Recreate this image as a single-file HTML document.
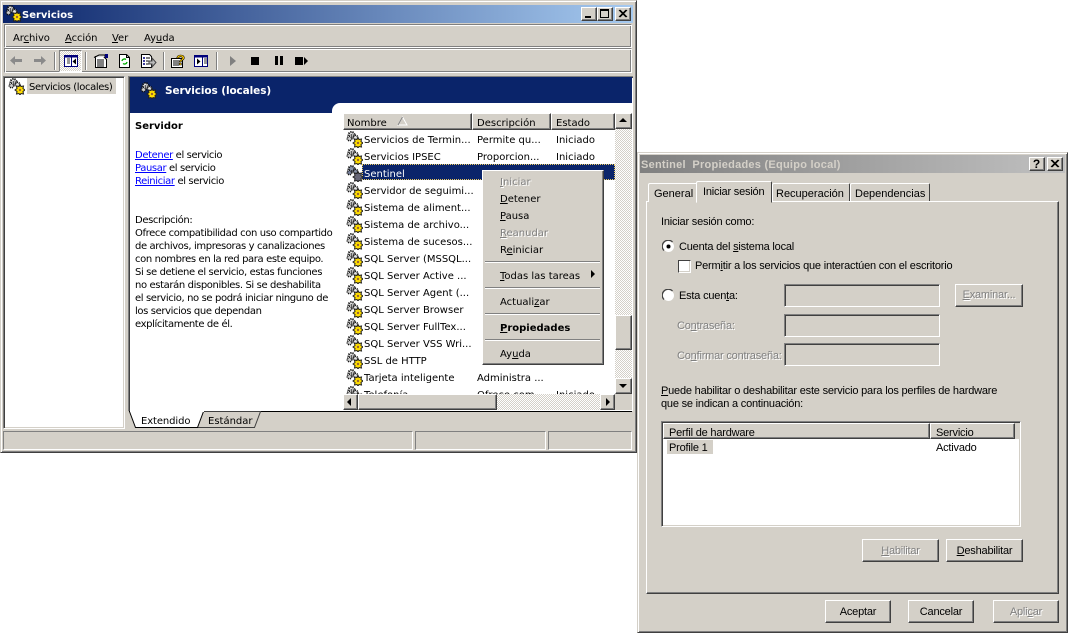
<!DOCTYPE html>
<html><head><meta charset="utf-8"><title>Servicios</title>
<style>
html,body{margin:0;padding:0;background:#fff;width:1070px;height:639px;overflow:hidden}
#r{position:relative;width:1070px;height:639px;overflow:hidden;font-family:"DejaVu Sans",sans-serif;font-size:10px;color:#000}
.a,.t,.b,.s,svg.i{position:absolute;box-sizing:border-box}
.t{white-space:nowrap;line-height:14px;height:14px;margin-top:2px}
.p{letter-spacing:-.38px;margin-top:4px}
.m{margin-top:4px}
#list .t{margin-top:4px}
.n{letter-spacing:-.08px}
.d{font-family:"Liberation Sans",sans-serif;font-size:11px}
#dlg .t{margin-top:1px}
#dlg .t.z{margin-top:0}
#dlg .l{letter-spacing:-.2px}
.g{color:#808080;text-shadow:1px 1px 0 #fff}
.raised{background:#d4d0c8;border:1px solid;border-color:#fff #404040 #404040 #fff;box-shadow:inset -1px -1px 0 #808080}
.sunk{border:1px solid;border-color:#808080 #fff #fff #808080;box-shadow:inset 1px 1px 0 #404040,inset -1px -1px 0 #d4d0c8}
.thin{border:1px solid;border-color:#808080 #fff #fff #808080}
.dith{background:repeating-conic-gradient(#fff 0 25%,#d4d0c8 0 50%) 0 0/2px 2px}
.sep{position:absolute;width:2px;background:#fff;border-left:1px solid #808080;box-sizing:border-box}
.hs{position:absolute;height:2px;background:#fff;border-top:1px solid #808080;box-sizing:border-box}
a{color:#0000ff;text-decoration:underline}
.sel{background:#d4d0c8}
.center{text-align:center}
</style></head><body><div id="r">
<svg width="0" height="0" style="position:absolute"><defs>
<symbol id="g" viewBox="0 0 17 17">
<circle cx="5.500" cy="4" r="3" fill="#e6e6e6" stroke="#111" stroke-width="2" stroke-dasharray="1.200 .9"/>
<circle cx="3.500" cy="7.500" r="2.200" fill="#d0d0d0" stroke="#111" stroke-width="1.600" stroke-dasharray="1.100 .8"/>
<circle cx="9.500" cy="6.500" r="2.200" fill="#e6e6e6" stroke="#111" stroke-width="1.600" stroke-dasharray="1.100 .8"/>
<circle cx="5.500" cy="4" r="1" fill="#555"/>
<path d="M12 6.500l1 2 2.500-.5-.5 2.500 2 1.500-2 1.500.5 2.500-2.500-.5-1 1.500-1-1.500-2.500.5.500-2.500-2-1.500 2-1.500-.5-2.500 2.500.5z" fill="#fd0" stroke="#222" stroke-width="1"/>
<circle cx="12" cy="12" r="1.200" fill="#963"/>
</symbol>
<symbol id="gd" viewBox="0 0 17 17">
<circle cx="5.500" cy="4" r="3" fill="#8a94aa" stroke="#111" stroke-width="2" stroke-dasharray="1.200 .9"/>
<circle cx="3.500" cy="7.500" r="2.200" fill="#7a84a0" stroke="#111" stroke-width="1.600" stroke-dasharray="1.100 .8"/>
<circle cx="9.500" cy="6.500" r="2.200" fill="#8a94aa" stroke="#111" stroke-width="1.600" stroke-dasharray="1.100 .8"/>
<path d="M12 6.500l1 2 2.500-.5-.5 2.500 2 1.500-2 1.500.5 2.500-2.500-.5-1 1.500-1-1.500-2.500.5.500-2.500-2-1.500 2-1.500-.5-2.500 2.500.5z" fill="#667" stroke="#222" stroke-width="1"/>
</symbol>
</defs></svg>

<!-- SERVICES WINDOW -->
<div class="a" style="left:0;top:0;width:637px;height:453px;background:#d4d0c8;border:1px solid;border-color:#d4d0c8 #404040 #404040 #d4d0c8;box-shadow:inset 1px 1px 0 #fff,inset -1px -1px 0 #808080"></div>
<div class="a" style="left:3px;top:5px;width:630px;height:18px;background:linear-gradient(90deg,#0a246a,#a6caf0)"></div>
<svg class="i" style="left:5px;top:5px" width="17" height="17"><use href="#g"/></svg>
<div class="t" style="left:22px;top:7px;font-weight:bold;color:#fff;font-size:10px">Servicios</div>
<div class="b raised" style="left:581px;top:7px;width:16px;height:14px"></div><div class="a" style="left:585px;top:16px;width:6px;height:2px;background:#000"></div>
<div class="b raised" style="left:597px;top:7px;width:16px;height:14px"></div><div class="a" style="left:600px;top:9px;width:9px;height:9px;border:1px solid #000;border-top-width:2px"></div>
<div class="b raised" style="left:615px;top:7px;width:16px;height:14px"></div>
<svg class="i" style="left:618px;top:9px" width="10" height="9"><path d="M1 1l7 7M2 1l7 7M8 1L1 8M9 1L2 8" stroke="#000" fill="none" stroke-width="1"/></svg>

<!-- menu -->
<div class="a" style="left:4px;top:24px;width:628px;height:24px;border:1px solid;border-color:#808080 #fff #fff #808080;box-shadow:inset 1px 1px 0 #fff,inset -1px -1px 0 #808080"></div>
<div class="t n" style="left:13px;top:30px">Ar<u>c</u>hivo</div>
<div class="t n" style="left:65px;top:30px"><u>A</u>cción</div>
<div class="t n" style="left:112px;top:30px"><u>V</u>er</div>
<div class="t n" style="left:144px;top:30px">Ay<u>u</u>da</div>

<!-- toolbar -->
<div class="a" style="left:4px;top:48px;width:628px;height:25px;border:1px solid;border-color:#808080 #fff #fff #808080;box-shadow:inset 1px 1px 0 #fff,inset -1px -1px 0 #808080"></div>
<svg class="i" style="left:9px;top:54px" width="15" height="13"><path d="M1 6.500L6 2v3h7v3H6v3z" fill="#8a8a8a"/></svg>
<svg class="i" style="left:32px;top:54px" width="15" height="13"><path d="M14 6.500L9 2v3H2v3h7v3z" fill="#8a8a8a"/></svg>
<div class="sep" style="left:54px;top:52px;height:18px"></div>
<div class="a dith" style="left:59px;top:50px;width:23px;height:22px;border:1px solid;border-color:#808080 #fff #fff #808080"></div>
<svg class="i" style="left:64px;top:55px" width="14" height="12"><rect x=".5" y=".5" width="13" height="11" fill="#fff" stroke="#00007b"/><rect x="1" y="1" width="12" height="1.500" fill="#00007b"/><path d="M7.500 1v10" stroke="#00007b"/><path d="M3 4h3M3 6h3M3 8h3" stroke="#333"/><path d="M12 3.500L8.500 6.500l3.500 3z" fill="#000"/></svg>
<div class="sep" style="left:85px;top:52px;height:18px"></div>
<svg class="i" style="left:92px;top:53px" width="18" height="16"><path d="M3.500 3.500h8l3 3v8h-11z" fill="#fff" stroke="#000"/><path d="M2 4.500L7 2h6v2" fill="#ddd" stroke="#000"/><rect x="13" y="1" width="3" height="4" fill="#00007b"/><path d="M5 7h7M5 9h7M5 11h7M5 13h7" stroke="#000"/></svg>
<svg class="i" style="left:117px;top:53px" width="15" height="16"><path d="M2.500 1.500h7l3 3v10h-10z" fill="#fff" stroke="#000"/><path d="M9.500 1.500v3h3" fill="none" stroke="#000"/><path d="M5 8a2.500 2.500 0 0 1 4-1.500M10 9a2.500 2.500 0 0 1-4 1.500" fill="none" stroke="#0a0" stroke-width="1.300"/></svg>
<svg class="i" style="left:140px;top:53px" width="17" height="16"><path d="M1.500 1.500h8l2 2v11h-10z" fill="#fff" stroke="#000"/><path d="M3 5h2M3 8h2M3 11h2" stroke="#00007b" stroke-width="1.500"/><path d="M6 5h4M6 8h3M6 11h3" stroke="#000"/><path d="M9 8h3V5l4 4.500-4 4.500v-3H9z" fill="#bbb" stroke="#444"/></svg>
<div class="sep" style="left:163px;top:52px;height:18px"></div>
<svg class="i" style="left:170px;top:53px" width="17" height="16"><path d="M1.500 5.500h11v9h-11z" fill="#fff" stroke="#000"/><path d="M3 8h6M3 10h6M3 12h6" stroke="#000"/><text x="6" y="12" font-family="Liberation Sans" font-weight="bold" font-size="15" fill="#fc0" stroke="#000" stroke-width=".6">?</text></svg>
<svg class="i" style="left:194px;top:55px" width="14" height="12"><rect x=".5" y=".5" width="13" height="11" fill="#fff" stroke="#00007b"/><rect x="1" y="1" width="12" height="1.500" fill="#00007b"/><path d="M8.500 1v10" stroke="#00007b"/><path d="M10 4h3M10 6h3M10 8h3" stroke="#333"/><path d="M3 3.500l3.500 3-3.500 3z" fill="#000"/></svg>
<div class="sep" style="left:216px;top:52px;height:18px"></div>
<svg class="i" style="left:229px;top:55px" width="9" height="12"><path d="M1 1l6 5-6 5z" fill="#808080"/></svg>
<div class="a" style="left:251px;top:57px;width:8px;height:8px;background:#000"></div>
<div class="a" style="left:275px;top:56px;width:3px;height:9px;background:#000"></div><div class="a" style="left:280px;top:56px;width:3px;height:9px;background:#000"></div>
<div class="a" style="left:295px;top:57px;width:8px;height:8px;background:#000"></div>
<svg class="i" style="left:303px;top:57px" width="6" height="8"><path d="M1 0l4 4-4 4z" fill="#000"/></svg>

<!-- left pane -->
<div class="a sunk" style="left:3px;top:76px;width:122px;height:353px;background:#fff"></div>
<svg class="i" style="left:8px;top:78px" width="17" height="17"><use href="#g"/></svg>
<div class="a sel" style="left:27px;top:78px;width:89px;height:16px"></div>
<div class="t p" style="left:29px;top:77px">Servicios (locales)</div>

<!-- right pane -->
<div class="a" style="left:128px;top:76px;width:505px;height:335px;background:#fff;border-top:1px solid #808080;border-left:1px solid #808080;box-shadow:inset 1px 1px 0 #404040"></div>
<div class="a" style="left:130px;top:77px;width:502px;height:26px;background:#0a246a"></div>
<div class="a" style="left:130px;top:103px;width:202px;height:10px;background:#0a246a"></div>
<div class="a" style="left:332px;top:103px;width:10px;height:10px;background:#0a246a"></div>
<div class="a" style="left:332px;top:103px;width:14px;height:14px;background:#fff;border-radius:8px 0 0 0"></div>
<svg class="i" style="left:140px;top:82px" width="17" height="17"><use href="#g"/></svg>
<div class="t" style="left:165px;top:83px;margin-top:1px;color:#fff;font-weight:bold;font-size:10.500px;letter-spacing:-.1px">Servicios (locales)</div>
<div class="t m" style="left:135px;top:116px;font-weight:bold">Servidor</div>
<div class="t p" style="left:135px;top:145px"><a>Detener</a> el servicio</div>
<div class="t p" style="left:135px;top:158px"><a>Pausar</a> el servicio</div>
<div class="t p" style="left:135px;top:171px"><a>Reiniciar</a> el servicio</div>
<div class="t p" style="left:135px;top:210px">Descripción:</div>
<div class="t p" style="left:135px;top:223px">Ofrece compatibilidad con uso compartido</div>
<div class="t p" style="left:135px;top:236px">de archivos, impresoras y canalizaciones</div>
<div class="t p" style="left:135px;top:249px">con nombres en la red para este equipo.</div>
<div class="t p" style="left:135px;top:262px">Si se detiene el servicio, estas funciones</div>
<div class="t p" style="left:135px;top:275px">no estarán disponibles. Si se deshabilita</div>
<div class="t p" style="left:135px;top:288px">el servicio, no se podrá iniciar ninguno de</div>
<div class="t p" style="left:135px;top:301px">los servicios que dependan</div>
<div class="t p" style="left:135px;top:314px">explícitamente de él.</div>

<!-- list -->
<div class="a" id="list" style="left:343px;top:113px;width:272px;height:281px;overflow:hidden">
<div class="a raised" style="left:0;top:0;width:129px;height:17px"></div>
<div class="a raised" style="left:129px;top:0;width:79px;height:17px"></div>
<div class="a raised" style="left:208px;top:0;width:64px;height:17px"></div>
<div class="t" style="left:4px;top:0">Nombre</div>
<svg class="i" style="left:54px;top:3px" width="11" height="10"><path d="M5.500 1L1 9h9z" fill="none" stroke="#fff"/><path d="M5.500 1L1 9" stroke="#808080" fill="none"/></svg>
<div class="t" style="left:134px;top:0">Descripción</div>
<div class="t" style="left:213px;top:0">Estado</div>

<svg class="i" style="left:3px;top:18px" width="17" height="17"><use href="#g"/></svg><div class="t" style="left:21px;top:17px">Servicios de Termin...</div><div class="t" style="left:134px;top:17px">Permite qu...</div><div class="t" style="left:213px;top:17px">Iniciado</div>
<svg class="i" style="left:3px;top:35px" width="17" height="17"><use href="#g"/></svg><div class="t" style="left:21px;top:34px">Servicios IPSEC</div><div class="t" style="left:134px;top:34px">Proporcion...</div><div class="t" style="left:213px;top:34px">Iniciado</div>
<div class="a" style="left:19px;top:51px;width:253px;height:16px;background:#0a246a;outline:1px dotted #e8c860;outline-offset:-1px"></div>
<svg class="i" style="left:3px;top:52px" width="17" height="17"><use href="#gd"/></svg><div class="t" style="left:21px;top:51px;color:#fff">Sentinel</div>
<svg class="i" style="left:3px;top:69px" width="17" height="17"><use href="#g"/></svg><div class="t" style="left:21px;top:68px">Servidor de seguimi...</div>
<svg class="i" style="left:3px;top:86px" width="17" height="17"><use href="#g"/></svg><div class="t" style="left:21px;top:85px">Sistema de aliment...</div>
<svg class="i" style="left:3px;top:103px" width="17" height="17"><use href="#g"/></svg><div class="t" style="left:21px;top:102px">Sistema de archivo...</div>
<svg class="i" style="left:3px;top:120px" width="17" height="17"><use href="#g"/></svg><div class="t" style="left:21px;top:119px">Sistema de sucesos...</div>
<svg class="i" style="left:3px;top:137px" width="17" height="17"><use href="#g"/></svg><div class="t" style="left:21px;top:136px">SQL Server (MSSQL...</div>
<svg class="i" style="left:3px;top:154px" width="17" height="17"><use href="#g"/></svg><div class="t" style="left:21px;top:153px">SQL Server Active ...</div>
<svg class="i" style="left:3px;top:171px" width="17" height="17"><use href="#g"/></svg><div class="t" style="left:21px;top:170px">SQL Server Agent (...</div>
<svg class="i" style="left:3px;top:188px" width="17" height="17"><use href="#g"/></svg><div class="t" style="left:21px;top:187px">SQL Server Browser</div>
<svg class="i" style="left:3px;top:205px" width="17" height="17"><use href="#g"/></svg><div class="t" style="left:21px;top:204px">SQL Server FullTex...</div>
<svg class="i" style="left:3px;top:222px" width="17" height="17"><use href="#g"/></svg><div class="t" style="left:21px;top:221px">SQL Server VSS Wri...</div>
<svg class="i" style="left:3px;top:239px" width="17" height="17"><use href="#g"/></svg><div class="t" style="left:21px;top:238px">SSL de HTTP</div>
<svg class="i" style="left:3px;top:256px" width="17" height="17"><use href="#g"/></svg><div class="t" style="left:21px;top:255px">Tarjeta inteligente</div><div class="t" style="left:134px;top:255px">Administra ...</div>
<svg class="i" style="left:3px;top:273px" width="17" height="17"><use href="#g"/></svg><div class="t" style="left:21px;top:272px">Telefonía</div><div class="t" style="left:134px;top:272px">Ofrece com...</div><div class="t" style="left:213px;top:272px">Iniciado</div>
</div>

<!-- scrollbars -->
<div class="a dith" style="left:615px;top:113px;width:17px;height:281px"></div>
<div class="a raised" style="left:615px;top:113px;width:17px;height:16px"></div>
<svg class="i" style="left:619px;top:118px" width="9" height="5"><path d="M4 0L0 4h8z" fill="#000"/></svg>
<div class="a raised" style="left:615px;top:315px;width:17px;height:35px"></div>
<div class="a raised" style="left:615px;top:378px;width:17px;height:16px"></div>
<svg class="i" style="left:619px;top:384px" width="9" height="5"><path d="M0 0h8L4 4z" fill="#000"/></svg>
<div class="a dith" style="left:343px;top:394px;width:272px;height:16px"></div>
<div class="a raised" style="left:343px;top:394px;width:15px;height:16px"></div>
<svg class="i" style="left:347px;top:398px" width="5" height="9"><path d="M4 0v8L0 4z" fill="#000"/></svg>
<div class="a raised" style="left:358px;top:394px;width:139px;height:16px"></div>
<div class="a raised" style="left:600px;top:394px;width:15px;height:16px"></div>
<svg class="i" style="left:606px;top:398px" width="5" height="9"><path d="M0 0v8l4-4z" fill="#000"/></svg>
<div class="a" style="left:615px;top:394px;width:17px;height:16px;background:#d4d0c8"></div>

<!-- context menu -->
<div class="a raised" style="left:482px;top:170px;width:122px;height:195px"></div>
<div class="t g m" style="left:500px;top:172px"><u>I</u>niciar</div>
<div class="t m" style="left:500px;top:189px"><u>D</u>etener</div>
<div class="t m" style="left:500px;top:206px"><u>P</u>ausa</div>
<div class="t g m" style="left:500px;top:223px"><u>R</u>eanudar</div>
<div class="t m" style="left:500px;top:240px">R<u>e</u>iniciar</div>
<div class="hs" style="left:485px;top:261px;width:115px"></div>
<div class="t m" style="left:500px;top:266px"><u>T</u>odas las tareas</div>
<svg class="i" style="left:591px;top:270px" width="5" height="9"><path d="M0 0v8l4-4z" fill="#000"/></svg>
<div class="hs" style="left:485px;top:287px;width:115px"></div>
<div class="t m" style="left:500px;top:292px">Actuali<u>z</u>ar</div>
<div class="hs" style="left:485px;top:313px;width:115px"></div>
<div class="t m" style="left:500px;top:318px;font-weight:bold"><u>P</u>ropiedades</div>
<div class="hs" style="left:485px;top:339px;width:115px"></div>
<div class="t m" style="left:500px;top:344px">Ay<u>u</u>da</div>

<!-- tabs -->
<div class="a" style="left:129px;top:411px;width:503px;height:1px;background:#000"></div>
<svg class="i" style="left:128px;top:410px" width="140" height="19">
<path d="M74.500 1.500h58l-6 16h-58z" fill="#d4d0c8" stroke="#404040"/>
<path d="M1.500 1.500l6 16h62l6-16z" fill="#fff" stroke="#000"/>
<path d="M2 1h74" stroke="#fff" stroke-width="2"/>
</svg>
<div class="t" style="left:141px;top:413px;letter-spacing:-.1px">Extendido</div>
<div class="t" style="left:208px;top:413px">Estándar</div>

<!-- status -->
<div class="a" style="left:3px;top:431px;width:410px;height:19px;border:1px solid;border-color:#808080 #fff #fff #808080"></div>
<div class="a" style="left:415px;top:431px;width:131px;height:19px;border:1px solid;border-color:#808080 #fff #fff #808080"></div>
<div class="a" style="left:548px;top:431px;width:84px;height:19px;border:1px solid;border-color:#808080 #fff #fff #808080"></div>

<!-- DIALOG -->
<div class="a d" id="dlg" style="left:0;top:0;width:1070px;height:639px">
<div class="a" style="left:637px;top:152px;width:431px;height:481px;background:#d4d0c8;border:1px solid;border-color:#d4d0c8 #404040 #404040 #d4d0c8;box-shadow:inset 1px 1px 0 #fff,inset -1px -1px 0 #808080"></div>
<div class="a" style="left:640px;top:155px;width:425px;height:18px;background:linear-gradient(90deg,#808080,#c0c0c0)"></div>
<div class="t" style="left:641px;top:157px;font-weight:bold;color:#d4d0c8;font-size:11px;letter-spacing:.25px">Sentinel&nbsp;&nbsp;Propiedades (Equipo local)</div>
<div class="a raised" style="left:1029px;top:157px;width:16px;height:14px"></div>
<div class="t z" style="left:1029px;top:157px;width:15px;text-align:center;font-weight:bold;font-size:12px">?</div>
<div class="a raised" style="left:1047px;top:157px;width:16px;height:14px"></div>
<svg class="i" style="left:1050px;top:159px" width="10" height="9"><path d="M1 1l7 7M2 1l7 7M8 1L1 8M9 1L2 8" stroke="#000" fill="none"/></svg>

<!-- page -->
<div class="a" style="left:646px;top:201px;width:413px;height:393px;border:1px solid;border-color:#fff #404040 #404040 #fff;box-shadow:inset -1px -1px 0 #808080"></div>
<!-- tabs -->
<div class="a" style="left:648px;top:183px;width:49px;height:19px;background:#d4d0c8;border-left:1px solid #fff;border-top:1px solid #fff;border-radius:2px 0 0 0"></div>
<div class="a" style="left:696px;top:181px;width:76px;height:22px;background:#d4d0c8;border:1px solid;border-color:#fff #404040 #d4d0c8 #fff;border-radius:2px 2px 0 0"></div>
<div class="a" style="left:772px;top:183px;width:78px;height:18px;background:#d4d0c8;border:1px solid;border-color:#fff #404040 #d4d0c8 #fff;border-bottom:0;border-radius:2px 2px 0 0"></div>
<div class="a" style="left:850px;top:183px;width:80px;height:18px;background:#d4d0c8;border:1px solid;border-color:#fff #404040 #d4d0c8 #fff;border-bottom:0;border-radius:2px 2px 0 0"></div>
<div class="t" style="left:654px;top:186px">General</div>
<div class="t l" style="left:703px;top:184px">Iniciar sesión</div>
<div class="t" style="left:776px;top:186px">Recuperación</div>
<div class="t" style="left:855px;top:186px">Dependencias</div>

<div class="t l" style="left:661px;top:214px">Iniciar sesión como:</div>

<svg class="i" style="left:662px;top:240px" width="13" height="13"><circle cx="6.500" cy="6.500" r="6" fill="#fff" stroke="#d4d0c8"/><path d="M2 10.500A6 6 0 0 1 10.500 2" stroke="#404040" stroke-width="1.300" fill="none"/><circle cx="6.500" cy="6.500" r="2" fill="#000"/></svg>
<div class="t z l" style="left:679px;top:240px">Cuenta del <u>s</u>istema local</div>
<div class="a" style="left:678px;top:260px;width:13px;height:13px;background:#fff;border:1px solid;border-color:#404040 #fff #fff #404040;box-shadow:inset -1px -1px 0 #d4d0c8"></div>
<div class="t z l" style="left:695px;top:259px">Perm<u>i</u>tir a los servicios que interactúen con el escritorio</div>

<svg class="i" style="left:662px;top:289px" width="13" height="13"><circle cx="6.500" cy="6.500" r="6" fill="#fff" stroke="#d4d0c8"/><path d="M2 10.500A6 6 0 0 1 10.500 2" stroke="#404040" stroke-width="1.300" fill="none"/></svg>
<div class="t z l" style="left:679px;top:289px">Esta cuen<u>t</u>a:</div>
<div class="a sunk" style="left:784px;top:284px;width:156px;height:23px"></div>
<div class="a raised" style="left:955px;top:284px;width:68px;height:23px"></div>
<div class="t g center z l" style="left:955px;top:288px;width:68px"><u>E</u>xaminar...</div>

<div class="t g l" style="left:677px;top:318px">Co<u>n</u>traseña:</div>
<div class="a sunk" style="left:784px;top:314px;width:156px;height:23px"></div>
<div class="t g l" style="left:677px;top:348px">Co<u>n</u>firmar contraseña:</div>
<div class="a sunk" style="left:784px;top:343px;width:156px;height:23px"></div>

<div class="t l" style="left:661px;top:383px"><u>P</u>uede habilitar o deshabilitar este servicio para los perfiles de hardware</div>
<div class="t l" style="left:661px;top:396px">que se indican a continuación:</div>

<div class="a sunk" style="left:661px;top:421px;width:360px;height:106px;background:#fff"></div>
<div class="a raised" style="left:663px;top:423px;width:267px;height:16px"></div>
<div class="a raised" style="left:930px;top:423px;width:85px;height:16px"></div>
<div class="a" style="left:1015px;top:423px;width:5px;height:16px;background:#d4d0c8"></div>
<div class="t l" style="left:669px;top:425px">Perfil de hardware</div>
<div class="t l" style="left:936px;top:425px">Servicio</div>
<div class="a sel" style="left:667px;top:440px;width:46px;height:14px"></div>
<div class="t l" style="left:669px;top:440px">Profile 1</div>
<div class="t l" style="left:936px;top:440px">Activado</div>

<div class="a raised" style="left:862px;top:539px;width:77px;height:23px"></div>
<div class="t g center l" style="left:862px;top:543px;width:77px"><u>H</u>abilitar</div>
<div class="a raised" style="left:946px;top:539px;width:77px;height:23px"></div>
<div class="t center l" style="left:946px;top:543px;width:77px"><u>D</u>eshabilitar</div>

<div class="a raised" style="left:825px;top:600px;width:66px;height:23px"></div>
<div class="t center l" style="left:825px;top:604px;width:66px">Aceptar</div>
<div class="a raised" style="left:908px;top:600px;width:66px;height:23px"></div>
<div class="t center l" style="left:908px;top:604px;width:66px">Cancelar</div>
<div class="a raised" style="left:993px;top:600px;width:66px;height:23px"></div>
<div class="t g center l" style="left:993px;top:604px;width:66px">Apli<u>c</u>ar</div>
</div>
</div></body></html>
